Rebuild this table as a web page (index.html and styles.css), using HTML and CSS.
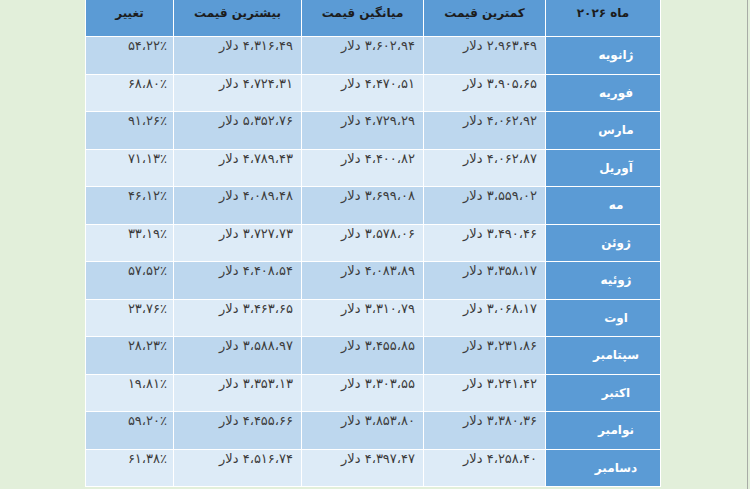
FILE: index.html
```html
<!DOCTYPE html>
<html lang="fa">
<head>
<meta charset="utf-8">
<title>پیش‌بینی قیمت ۲۰۲۶</title>
<link rel="stylesheet" href="styles.css">
</head>
<body>
<div class="page">
  <table class="prices" dir="rtl">
    <colgroup>
      <col class="c-month"><col class="c-min"><col class="c-avg"><col class="c-max"><col class="c-chg">
    </colgroup>
    <thead>
      <tr><th>ماه ۲۰۲۶</th><th>کمترین قیمت</th><th>میانگین قیمت</th><th>بیشترین قیمت</th><th>تغییر</th></tr>
    </thead>
    <tbody>
      <tr><td class="month">ژانویه</td><td>۲،۹۶۳،۴۹ دلار</td><td>۳،۶۰۲،۹۴ دلار</td><td>۴،۳۱۶،۴۹ دلار</td><td>۵۴،۲۲٪</td></tr>
      <tr><td class="month">فوریه</td><td>۳،۹۰۵،۶۵ دلار</td><td>۴،۴۷۰،۵۱ دلار</td><td>۴،۷۲۴،۳۱ دلار</td><td>۶۸،۸۰٪</td></tr>
      <tr><td class="month">مارس</td><td>۴،۰۶۲،۹۲ دلار</td><td>۴،۷۲۹،۲۹ دلار</td><td>۵،۳۵۲،۷۶ دلار</td><td>۹۱،۲۶٪</td></tr>
      <tr><td class="month">آوریل</td><td>۴،۰۶۲،۸۷ دلار</td><td>۴،۴۰۰،۸۲ دلار</td><td>۴،۷۸۹،۴۳ دلار</td><td>۷۱،۱۳٪</td></tr>
      <tr><td class="month">مه</td><td>۳،۵۵۹،۰۲ دلار</td><td>۳،۶۹۹،۰۸ دلار</td><td>۴،۰۸۹،۴۸ دلار</td><td>۴۶،۱۲٪</td></tr>
      <tr><td class="month">ژوئن</td><td>۳،۴۹۰،۴۶ دلار</td><td>۳،۵۷۸،۰۶ دلار</td><td>۳،۷۲۷،۷۳ دلار</td><td>۳۳،۱۹٪</td></tr>
      <tr><td class="month">ژوئیه</td><td>۳،۳۵۸،۱۷ دلار</td><td>۴،۰۸۳،۸۹ دلار</td><td>۴،۴۰۸،۵۴ دلار</td><td>۵۷،۵۲٪</td></tr>
      <tr><td class="month">اوت</td><td>۳،۰۶۸،۱۷ دلار</td><td>۳،۳۱۰،۷۹ دلار</td><td>۳،۴۶۳،۶۵ دلار</td><td>۲۳،۷۶٪</td></tr>
      <tr><td class="month">سپتامبر</td><td>۳،۲۳۱،۸۶ دلار</td><td>۳،۴۵۵،۸۵ دلار</td><td>۳،۵۸۸،۹۷ دلار</td><td>۲۸،۲۳٪</td></tr>
      <tr><td class="month">اکتبر</td><td>۳،۲۴۱،۴۲ دلار</td><td>۳،۳۰۳،۵۵ دلار</td><td>۳،۳۵۳،۱۳ دلار</td><td>۱۹،۸۱٪</td></tr>
      <tr><td class="month">نوامبر</td><td>۳،۳۸۰،۳۶ دلار</td><td>۳،۸۵۳،۸۰ دلار</td><td>۴،۴۵۵،۶۶ دلار</td><td>۵۹،۲۰٪</td></tr>
      <tr><td class="month">دسامبر</td><td>۴،۲۵۸،۴۰ دلار</td><td>۴،۳۹۷،۴۷ دلار</td><td>۴،۵۱۶،۷۴ دلار</td><td>۶۱،۳۸٪</td></tr>
    </tbody>
  </table>
</div>
</body>
</html>
```

FILE: styles.css
```css
html, body {
  margin: 0;
  padding: 0;
  background: #e2efda;
}

.page {
  box-sizing: border-box;
  width: 748px;
  height: 489px;
  padding-left: 85px;
  border-right: 1px solid #a8aca6;
  background: #e2efda;
  overflow: hidden;
}

.prices {
  border-collapse: collapse;
  table-layout: fixed;
  width: 575px;
  font-family: "DejaVu Sans", sans-serif;
}

.c-month { width: 115px; }
.c-min { width: 122px; }
.c-avg { width: 122px; }
.c-max { width: 128px; }
.c-chg { width: 88px; }

.prices th {
  background: #5b9bd5;
  color: #1c1c1c;
  font-weight: bold;
  font-size: 12px;
  line-height: 18px;
  height: 32px;
  padding: 4px 0 0;
  vertical-align: top;
  text-align: center;
  border: 1px solid #ffffff;
  border-top: none;
}

.prices td {
  height: 37.5px;
  padding: 1px 8px 0;
  box-sizing: border-box;
  vertical-align: top;
  text-align: right;
  font-size: 13px;
  line-height: 16px;
  color: #3c3c3c;
  border: 1px solid #ffffff;
  white-space: nowrap;
}

.prices tbody tr:nth-child(odd) td { background: #bdd7ee; }
.prices tbody tr:nth-child(even) td { background: #ddebf7; }

.prices tbody tr td:last-child { padding-right: 6px; }

.prices tbody tr td.month {
  background: #5b9bd5;
  color: #ffffff;
  font-weight: bold;
  font-size: 12px;
  text-align: center;
  vertical-align: middle;
  padding: 0 0 0 26px;
}
```
